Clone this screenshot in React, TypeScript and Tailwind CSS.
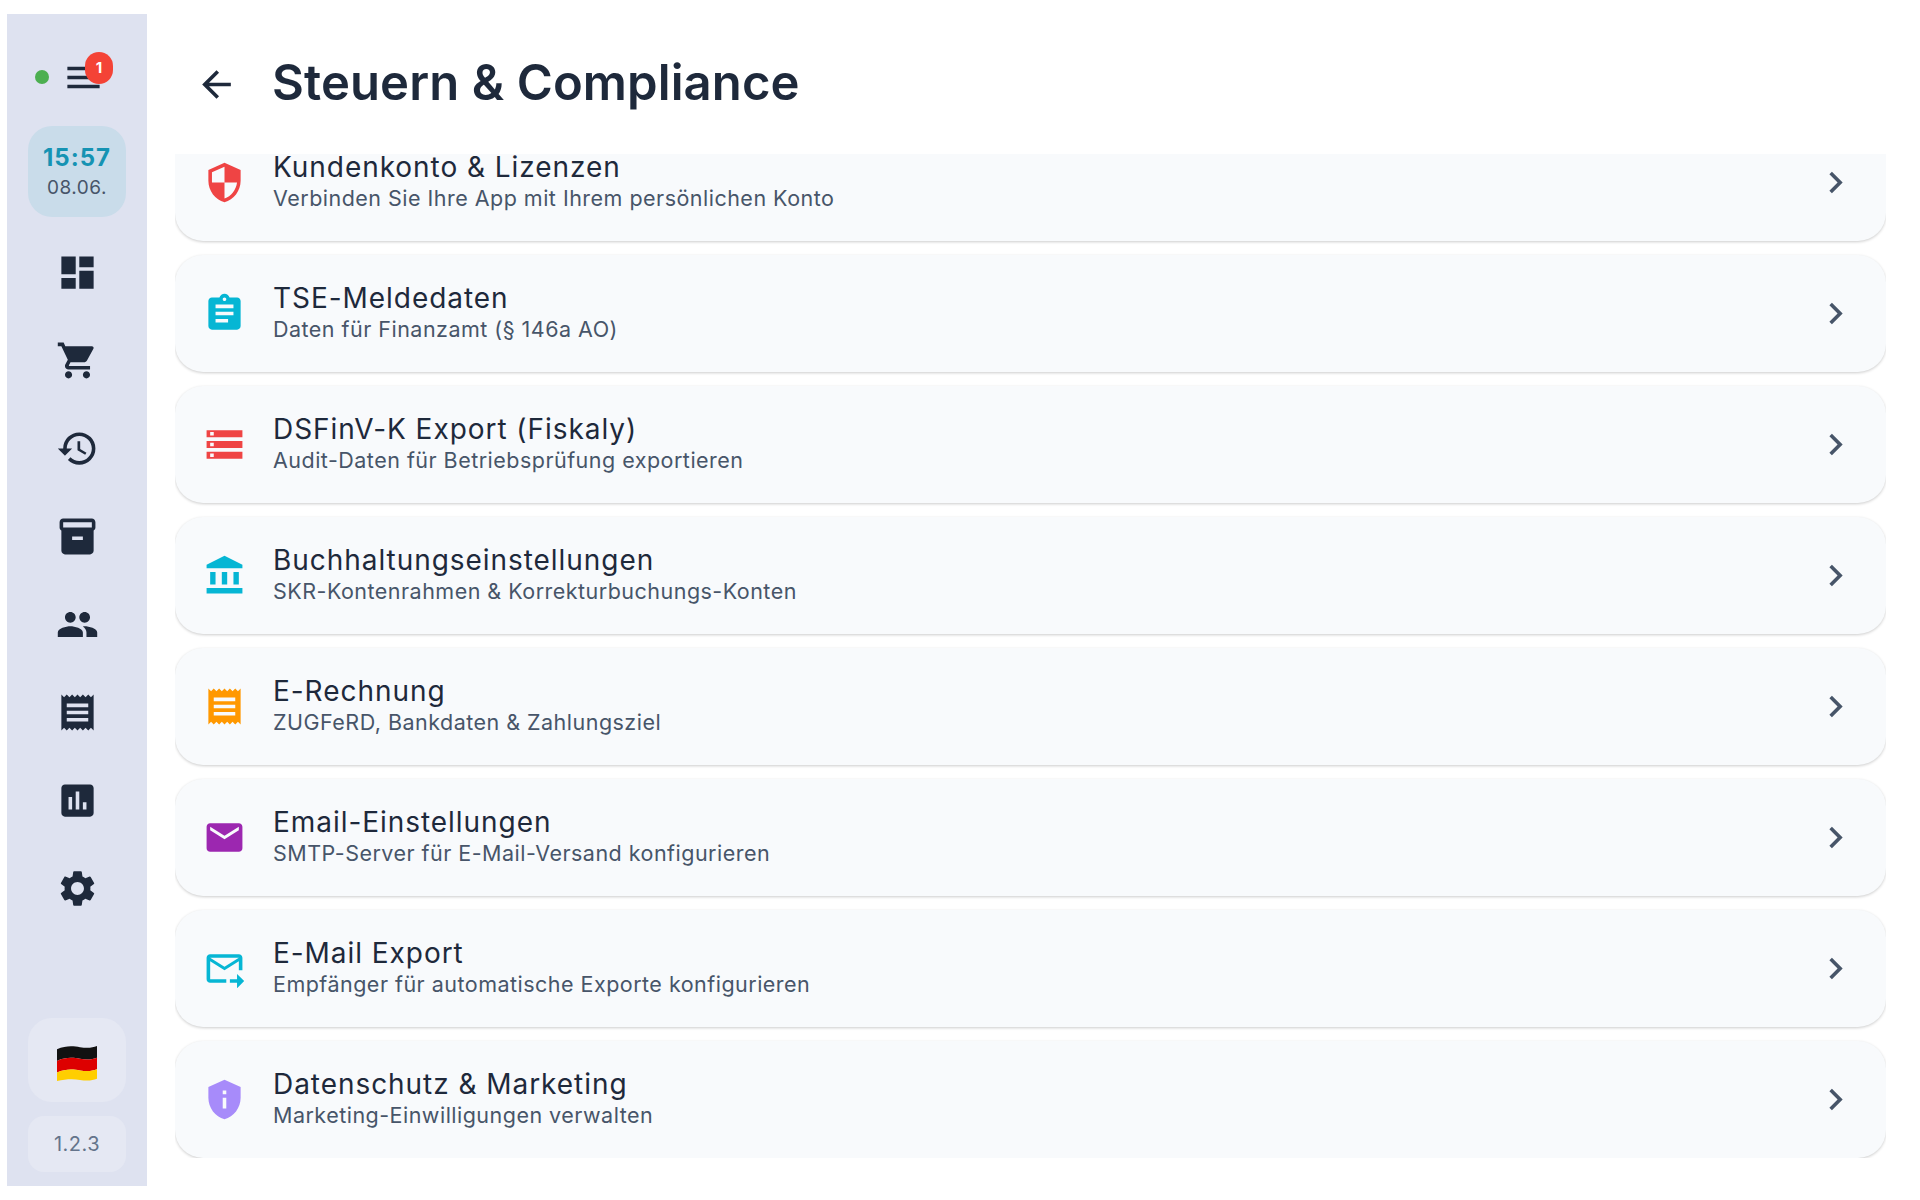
import {
  MdAccountBalance,
  MdArrowBack,
  MdAssessment,
  MdAssignment,
  MdChevronRight,
  MdDashboard,
  MdEmail,
  MdForwardToInbox,
  MdHistory,
  MdInventory2,
  MdMenu,
  MdPeople,
  MdPrivacyTip,
  MdReceipt,
  MdSecurity,
  MdSettings,
  MdShoppingCart,
  MdStorage,
} from "react-icons/md";

const navIcons = [MdDashboard, MdShoppingCart, MdHistory, MdInventory2, MdPeople, MdReceipt, MdAssessment, MdSettings];

const items = [
  { icon: MdSecurity, color: "text-[#ef4444]", title: "Kundenkonto & Lizenzen", sub: "Verbinden Sie Ihre App mit Ihrem persönlichen Konto" },
  { icon: MdAssignment, color: "text-[#06b6d4]", title: "TSE-Meldedaten", sub: "Daten für Finanzamt (§ 146a AO)" },
  { icon: MdStorage, color: "text-[#ef4444]", title: "DSFinV-K Export (Fiskaly)", sub: "Audit-Daten für Betriebsprüfung exportieren" },
  { icon: MdAccountBalance, color: "text-[#06b6d4]", title: "Buchhaltungseinstellungen", sub: "SKR-Kontenrahmen & Korrekturbuchungs-Konten" },
  { icon: MdReceipt, color: "text-[#ff9800]", title: "E-Rechnung", sub: "ZUGFeRD, Bankdaten & Zahlungsziel" },
  { icon: MdEmail, color: "text-[#9c27b0]", title: "Email-Einstellungen", sub: "SMTP-Server für E-Mail-Versand konfigurieren" },
  { icon: MdForwardToInbox, color: "text-[#06b6d4]", title: "E-Mail Export", sub: "Empfänger für automatische Exporte konfigurieren" },
  { icon: MdPrivacyTip, color: "text-[#a78bfa]", title: "Datenschutz & Marketing", sub: "Marketing-Einwilligungen verwalten" },
];

function FlagDE() {
  return (
    <svg width="42" height="38" viewBox="0 0 42 36" preserveAspectRatio="none">
      <path d="M1 5 C10 1 18 2 24 3 C30 4 36 4 41 2 V13 C36 15 30 15 24 14 C18 13 10 12 1 16 Z" fill="#111111" />
      <path d="M1 16 C10 12 18 13 24 14 C30 15 36 15 41 13 V24 C36 26 30 26 24 25 C18 24 10 23 1 27 Z" fill="#dd0000" />
      <path d="M1 27 C10 23 18 24 24 25 C30 26 36 26 41 24 V33 C36 35 30 35 24 34 C18 33 10 33 1 35 Z" fill="#ffce00" />
    </svg>
  );
}

export default function App() {
  return (
    <div className="w-[1920px] h-[1200px] bg-white flex pl-[7px] py-[14px] font-['Inter',sans-serif] text-[#1e293b] overflow-hidden">
      <aside className="w-[140px] h-[1172px] shrink-0 bg-[#dee2f0] flex flex-col items-center">
        <div className="h-[112px] w-full flex items-center pl-[28px] pt-[14px]">
          <span className="w-[14px] h-[14px] rounded-full bg-[#4caf50]" />
          <div className="relative ml-[15px] w-[38px] h-[38px] flex items-center justify-center">
            <MdMenu size={43} className="shrink-0" />
            <span className="absolute -right-[11px] -top-[6px] w-[28px] h-[32px] rounded-full bg-[#f44336] text-white text-[15px] font-bold flex items-center justify-center">1</span>
          </div>
        </div>
        <div className="w-[98px] h-[91px] rounded-[24px] bg-[#c9dcea] flex flex-col items-center justify-center">
          <span className="text-[24px] leading-[32px] font-bold tracking-[1px] text-[#1593b3]">15:57</span>
          <span className="text-[19px] leading-[28px] tracking-[0.5px] text-[#475569]">08.06.</span>
        </div>
        <nav className="mt-[34px] flex flex-col items-center gap-[45px]">
          {navIcons.map((Icon, i) => (
            <Icon key={i} size={43} className="block" />
          ))}
        </nav>
        <div className="mt-auto w-[98px] h-[84px] rounded-[24px] bg-[#e5e8f3] flex items-center justify-center pt-[6px]">
          <FlagDE />
        </div>
        <div className="mt-[14px] mb-[14px] w-[98px] h-[56px] rounded-[16px] bg-[#e5e8f3] flex items-center justify-center text-[20px] tracking-[0.5px] text-[#64748b]">1.2.3</div>
      </aside>

      <main className="flex-1 min-w-0 flex flex-col pl-[28px] pr-[34px]">
        <header className="h-[140px] shrink-0 flex items-center">
          <MdArrowBack size={43} className="ml-[20px] shrink-0" />
          <h1 className="ml-[34px] text-[49px] font-semibold leading-none pb-[3px] tracking-[0.1px]">Steuern &amp; Compliance</h1>
        </header>
        <div className="h-[1004px] overflow-hidden shrink-0">
          <ul className="-mt-[30px] flex flex-col gap-[14px] pb-[2px]">
            {items.map((it) => (
              <li
                key={it.title}
                className="h-[117px] shrink-0 rounded-[28px] bg-[#f8fafc] shadow-[0_1px_3px_rgba(0,0,0,0.2)] flex items-center pl-[28px] pr-[29px]"
              >
                <it.icon size={43} className={`shrink-0 ${it.color}`} />
                <div className="ml-[27px] flex-1 min-w-0 -mt-[2px]">
                  <div className="text-[28px] leading-[32px] tracking-[0.95px]">{it.title}</div>
                  <div className="text-[21.5px] leading-[30px] tracking-[0.48px] text-[#475569]">{it.sub}</div>
                </div>
                <MdChevronRight size={43} className="shrink-0 text-[#475569]" />
              </li>
            ))}
          </ul>
        </div>
      </main>
    </div>
  );
}
